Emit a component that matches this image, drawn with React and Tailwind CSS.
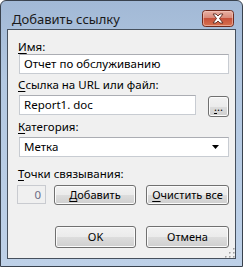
import React from "react";

const btn =
  "flex items-center justify-center rounded-[3px] border border-[#707070] bg-[linear-gradient(to_bottom,#f2f2f2_0%,#ebebeb_50%,#dddddd_50%,#cfcfcf_100%)] shadow-[inset_0_0_0_1px_#fbfbfb] text-[11px] leading-[14px] text-black";

const field =
  "flex items-center border border-[#c8ccd2] border-t-[#abadb3] bg-white pl-[4px] text-[11.5px] leading-[14px] text-black";

function CloseButton() {
  return (
    <svg width="32" height="17" viewBox="0 0 32 17" className="mt-[9px] mr-[2px] block">
      <defs>
        <linearGradient id="cb" x1="0" y1="0" x2="0" y2="1">
          <stop offset="0" stopColor="#eab4a8" />
          <stop offset="0.45" stopColor="#d98b7b" />
          <stop offset="0.5" stopColor="#c7513b" />
          <stop offset="1" stopColor="#d8734f" />
        </linearGradient>
      </defs>
      <rect x="0.5" y="0.5" width="31" height="16" rx="3" fill="url(#cb)" stroke="#6e2a1e" />
      <rect x="1.5" y="1.5" width="29" height="14" rx="2" fill="none" stroke="#f3c9bf" strokeOpacity="0.6" />
      <path
        d="M11 4h3l2 2 2-2h3l-3.5 4.5L21 13h-3l-2-2-2 2h-3l3.5-4.5z"
        fill="#ffffff"
        stroke="#5a2a22"
        strokeWidth="0.9"
        strokeLinejoin="round"
      />
    </svg>
  );
}

function Grip() {
  const dots = [
    [9, 1],
    [9, 5],
    [5, 5],
    [9, 9],
    [5, 9],
    [1, 9],
  ];
  return (
    <svg width="11" height="11" viewBox="0 0 11 11" className="absolute right-0 bottom-0">
      {dots.map(([x, y]) => (
        <g key={`${x}-${y}`}>
          <rect x={x + 0.7} y={y + 0.7} width="1.6" height="1.6" fill="#ffffff" />
          <rect x={x} y={y} width="1.6" height="1.6" fill="#a0a0a0" />
        </g>
      ))}
    </svg>
  );
}

export default function App() {
  return (
    <div className="h-[267px] w-[243px] font-['Noto_Sans',sans-serif] text-[11.5px] text-black">
      <div className="flex h-full flex-col rounded-t-[6px] border border-[#39424e] bg-[linear-gradient(to_bottom,#a2b9d6_0%,#b3c8e1_30%,#bed1e8_100%)] px-[6px] pb-[7px]">
        {/* title bar */}
        <div className="flex h-[28px] items-start justify-between">
          <span className="pl-[5px] pt-[10px] text-[13px] leading-[16px] text-[#1a1a1a]">
            Добавить ссылку
          </span>
          <CloseButton />
        </div>

        {/* client area */}
        <div className="relative flex flex-1 flex-col border border-[#46505d] bg-[#f0f0f0] pl-[10px] pr-[6px] pt-[10px]">
          <div className="h-[14px] leading-[14px]">
            <span className="underline underline-offset-[2px]">И</span>мя:
          </div>
          <div className={`${field} ml-[1px] h-[20px]`}>Отчет по обслуживанию</div>

          <div className="mt-[4px] h-[14px] leading-[14px]">
            <span className="underline underline-offset-[2px]">С</span>сылка на URL или файл:
          </div>
          <div className="mt-[3px] flex items-start justify-between">
            <div className={`${field} ml-[1px] h-[20px] w-[177px]`}>Report1. doc</div>
            <div className={`${btn} mt-[1px] h-[21px] w-[21px] text-[#3b2a6e]`}>
              <span className="underline underline-offset-[2px]">.</span>..
            </div>
          </div>

          <div className="mt-[3px] h-[14px] leading-[14px]">
            <span className="underline underline-offset-[2px]">К</span>атегория:
          </div>
          <div className={`${field} ml-[1px] mt-[3px] h-[20px] justify-between pr-[9px]`}>
            <span>Метка</span>
            <svg width="7" height="4" viewBox="0 0 7 4" className="block">
              <path d="M0 0h7L3.5 4z" fill="#000000" />
            </svg>
          </div>

          <div className="mt-[10px] h-[14px] leading-[14px]">
            <span className="underline underline-offset-[2px]">Т</span>очки связывания:
          </div>
          <div className="mt-[4px] flex items-start">
            <div className="ml-[-1px] flex h-[19px] w-[29px] items-center justify-end border border-[#c9cbd0] bg-[#f0f0f0] pr-[4px] text-[#6d6d85]">
              0
            </div>
            <div className={`${btn} ml-[8px] h-[20px] w-[82px]`}>
              <span className="underline underline-offset-[2px]">Д</span>обавить
            </div>
            <div className={`${btn} ml-[10px] h-[20px] w-[83px]`}>
              <span className="underline underline-offset-[2px]">О</span>чистить все
            </div>
          </div>

          <div className="mt-[21px] flex items-start">
            <div
              className={`${btn} ml-[37px] h-[22px] w-[81px] border-[#3c7fb1] shadow-[inset_0_0_0_1px_#b6e3f8]`}
            >
              OK
            </div>
            <div className={`${btn} ml-[10px] h-[22px] w-[83px]`}>Отмена</div>
          </div>

          <Grip />
        </div>
      </div>
    </div>
  );
}
